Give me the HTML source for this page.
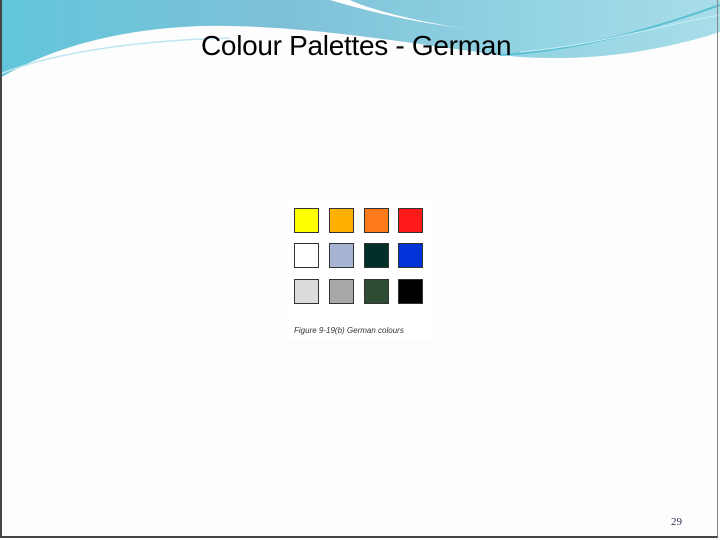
<!DOCTYPE html>
<html><head><style>
body{margin:0;width:720px;height:540px;overflow:hidden;background:#fdfdfd;position:relative;font-family:"Liberation Sans",sans-serif}
.fr{position:absolute;left:0;top:0;width:718px;height:538px;border-left:2px solid #444;border-bottom:2px solid #444;border-right:1px solid #888;box-sizing:border-box}
.sq{position:absolute;width:25px;height:25px;border:1px solid #333;box-sizing:border-box}
</style></head><body>
<svg width="720" height="90" style="position:absolute;left:0;top:0">
<defs><linearGradient id="g" x1="0" x2="1" y1="0" y2="0">
<stop offset="0" stop-color="#62c6da"/><stop offset="0.4" stop-color="#7ec0d8"/><stop offset="0.7" stop-color="#90d2e2"/><stop offset="1" stop-color="#a8dde8"/></linearGradient></defs>
<path d="M0 0H720V32C640 58 560 62 500 55C400 42 300 24 200 26C100 30 40 55 0 78Z" fill="url(#g)"/>
<path d="M330 0C380 15 430 25 480 30C430 25 370 10 350 0Z" fill="#fff"/>
<path d="M0 74C60 50 150 40 230 38" stroke="#bfe6ee" stroke-width="1.5" fill="none"/>
<path d="M500 55C580 50 650 30 720 5" stroke="#5cc0d4" stroke-width="2" fill="none"/>
<path d="M520 52C600 45 660 25 720 15" stroke="#c8eef4" stroke-width="1" fill="none"/>
</svg>
<div style="position:absolute;left:201px;top:30px;font-size:28px;color:#000;letter-spacing:-0.3px">Colour Palettes - German</div>
<div style="position:absolute;left:286px;top:200px;width:148px;height:140px;background:#fff"></div>
<div class="sq" style="left:294px;top:208px;background:#ffff00"></div>
<div class="sq" style="left:329px;top:208px;background:#ffb000"></div>
<div class="sq" style="left:364px;top:208px;background:#ff7a1a"></div>
<div class="sq" style="left:398px;top:208px;background:#ff1a1a"></div>
<div class="sq" style="left:294px;top:243px;background:#ffffff"></div>
<div class="sq" style="left:329px;top:243px;background:#a8b4d4"></div>
<div class="sq" style="left:364px;top:243px;background:#003028"></div>
<div class="sq" style="left:398px;top:243px;background:#0034d8"></div>
<div class="sq" style="left:294px;top:279px;background:#dcdcdc"></div>
<div class="sq" style="left:329px;top:279px;background:#a8a8a8"></div>
<div class="sq" style="left:364px;top:279px;background:#2c4c34"></div>
<div class="sq" style="left:398px;top:279px;background:#000"></div>
<div style="position:absolute;left:294px;top:326px;font-size:8px;font-style:italic;color:#333">Figure 9-19(b) German colours</div>
<div style="position:absolute;left:671px;top:516px;font-size:11px;color:#335;font-family:'Liberation Serif',serif">29</div>
<div class="fr"></div>
</body></html>
